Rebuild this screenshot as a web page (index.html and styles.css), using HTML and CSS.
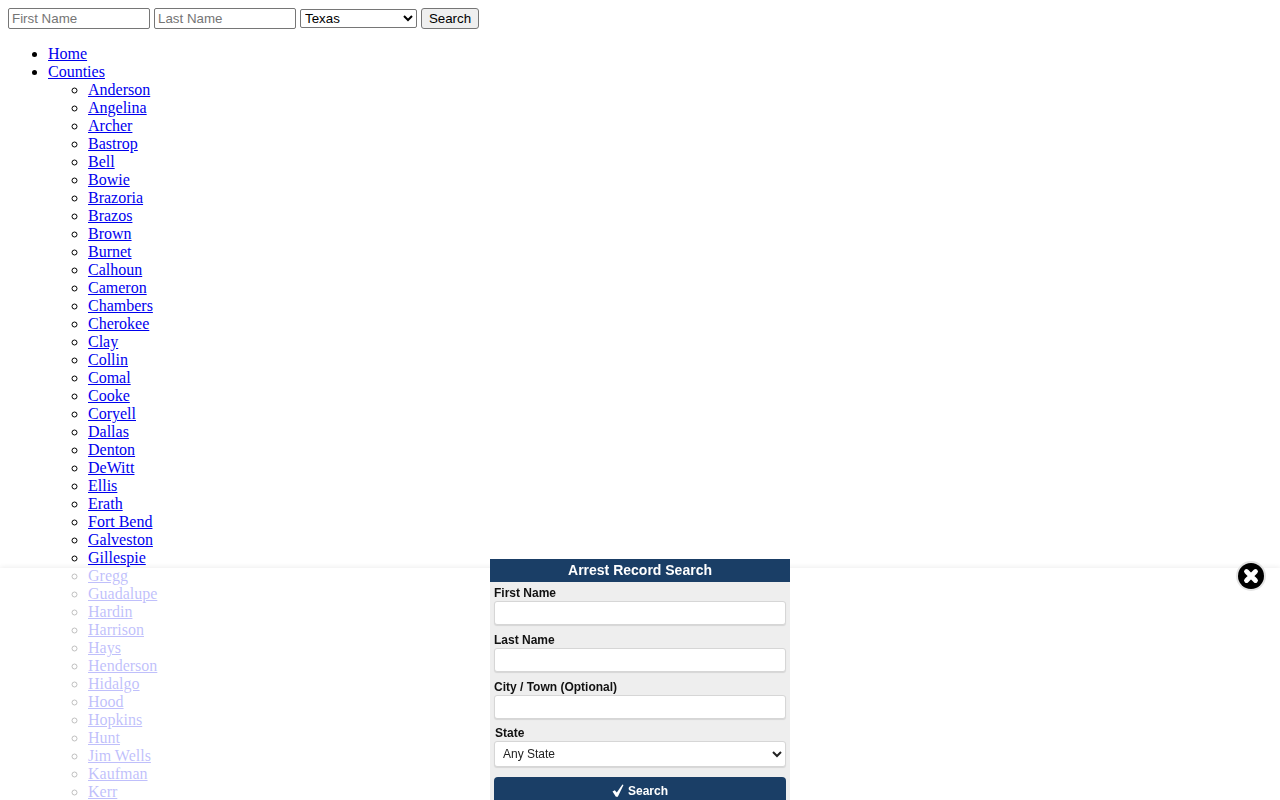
FILE: index.html
```html
<!DOCTYPE html>
<html lang="en">
<head>
<meta charset="utf-8">
<title>Arrest Records</title>
<link rel="stylesheet" href="styles.css">
</head>
<body>
<form class="top-search">
  <input class="top-input" type="text" placeholder="First Name">
  <input class="top-input" type="text" placeholder="Last Name">
  <select class="top-select"><option>Texas</option></select>
  <button class="top-button" type="button">Search</button>
</form>
<ul class="nav">
  <li><a href="#">Home</a></li>
  <li><a href="#">Counties</a>
    <ul>
      <li><a href="#">Anderson</a></li>
      <li><a href="#">Angelina</a></li>
      <li><a href="#">Archer</a></li>
      <li><a href="#">Bastrop</a></li>
      <li><a href="#">Bell</a></li>
      <li><a href="#">Bowie</a></li>
      <li><a href="#">Brazoria</a></li>
      <li><a href="#">Brazos</a></li>
      <li><a href="#">Brown</a></li>
      <li><a href="#">Burnet</a></li>
      <li><a href="#">Calhoun</a></li>
      <li><a href="#">Cameron</a></li>
      <li><a href="#">Chambers</a></li>
      <li><a href="#">Cherokee</a></li>
      <li><a href="#">Clay</a></li>
      <li><a href="#">Collin</a></li>
      <li><a href="#">Comal</a></li>
      <li><a href="#">Cooke</a></li>
      <li><a href="#">Coryell</a></li>
      <li><a href="#">Dallas</a></li>
      <li><a href="#">Denton</a></li>
      <li><a href="#">DeWitt</a></li>
      <li><a href="#">Ellis</a></li>
      <li><a href="#">Erath</a></li>
      <li><a href="#">Fort Bend</a></li>
      <li><a href="#">Galveston</a></li>
      <li><a href="#">Gillespie</a></li>
      <li><a href="#">Gregg</a></li>
      <li><a href="#">Guadalupe</a></li>
      <li><a href="#">Hardin</a></li>
      <li><a href="#">Harrison</a></li>
      <li><a href="#">Hays</a></li>
      <li><a href="#">Henderson</a></li>
      <li><a href="#">Hidalgo</a></li>
      <li><a href="#">Hood</a></li>
      <li><a href="#">Hopkins</a></li>
      <li><a href="#">Hunt</a></li>
      <li><a href="#">Jim Wells</a></li>
      <li><a href="#">Kaufman</a></li>
      <li><a href="#">Kerr</a></li>
    </ul>
  </li>
</ul>
<aside class="overlay">
  <form class="panel">
    <h2 class="panel-title">Arrest Record Search</h2>
    <div class="panel-body">
      <label class="field"><span class="field-label">First Name</span><input class="field-input" type="text"></label>
      <label class="field"><span class="field-label">Last Name</span><input class="field-input" type="text"></label>
      <label class="field"><span class="field-label">City / Town (Optional)</span><input class="field-input" type="text"></label>
      <label class="field field-state"><span class="field-label">State</span><select class="field-select"><option>Any State</option></select></label>
      <button class="panel-button" type="button">
        <svg class="check" viewBox="0 0 12 13" width="12" height="13" aria-hidden="true"><path d="M0.5 7.5 L2.8 6.3 L4.8 8.4 L10.4 0.5 L11.5 1.1 L5.8 12.8 L3.9 12.8 Z" fill="#fff"/></svg>
        Search
      </button>
    </div>
  </form>
  <button class="close" type="button" aria-label="Close">
    <svg viewBox="0 0 30 30" width="30" height="30" aria-hidden="true">
      <circle cx="15" cy="15" r="15" fill="#e4e4e4"/>
      <circle cx="15" cy="15" r="13" fill="#000"/>
      <path d="M10.5 10.5 L19.5 19.5 M19.5 10.5 L10.5 19.5" stroke="#fff" stroke-width="4.8" stroke-linecap="round"/>
    </svg>
  </button>
</aside>
</body>
</html>
```
FILE: styles.css
```css
html {
  overflow: hidden;
}
body {
  margin: 8px;
  font-family: "Liberation Serif", "Times New Roman", serif;
  font-size: 16px;
  color: #000;
  background: #fff;
}
.top-search {
  display: flex;
  align-items: center;
  gap: 4px;
  height: 21px;
}
.top-input,
.top-select,
.top-button {
  font-family: "Liberation Sans", Arial, sans-serif;
  font-size: 13.333px;
  box-sizing: border-box;
  margin: 0;
}
.top-input {
  width: 142px;
  height: 21px;
  padding: 1px 3px;
  border: 1px solid #767676;
  border-radius: 2px;
  background: #fff;
}
.top-select {
  width: 117px;
  height: 19px;
  border: 1px solid #767676;
  border-radius: 2px;
  background: #fff;
}
.top-button {
  width: 58px;
  height: 21px;
  padding: 1px 6px;
  border: 1px solid #767676;
  border-radius: 3px;
  background: #efefef;
  color: #000;
}
.nav {
  margin: 16px 0;
  padding-left: 40px;
  line-height: 18px;
}
.nav ul {
  margin: 0;
  padding-left: 40px;
}
.overlay {
  position: fixed;
  left: 0;
  right: 0;
  bottom: 0;
  height: 232px;
  display: flex;
  justify-content: center;
  background: rgba(255, 255, 255, 0.75);
  box-shadow: 0 -1px 5px rgba(0, 0, 0, 0.07);
}
.panel {
  width: 300px;
  margin-top: -9px;
  background: #eee;
  font-family: "Liberation Sans", Arial, sans-serif;
  filter: blur(0.3px);
}
.panel-title {
  margin: 0;
  height: 23px;
  line-height: 23px;
  font-size: 14px;
  font-weight: bold;
  text-align: center;
  color: #fff;
  background: #1a3e66;
}
.panel-body {
  display: flex;
  flex-direction: column;
  padding: 4px 4px 0;
}
.field {
  display: flex;
  flex-direction: column;
  gap: 1px;
  margin-bottom: 8px;
}
.field-label {
  height: 14px;
  line-height: 14px;
  font-size: 12px;
  font-weight: bold;
  color: #111;
}
.field-input {
  box-sizing: border-box;
  height: 24px;
  margin: 0;
  background: #fff;
  border: 1px solid #d6d6d6;
  border-radius: 3px;
  box-shadow: 0 1px 1px rgba(0, 0, 0, 0.1);
}
.field-state {
  gap: 1px;
  margin-top: -1px;
  margin-bottom: 10px;
}
.field-state .field-label {
  padding-left: 1px;
}
.field-select {
  box-sizing: border-box;
  height: 26px;
  padding-left: 4px;
  background: #fff;
  border: 1px solid #d6d6d6;
  border-radius: 3px;
  box-shadow: 0 1px 1px rgba(0, 0, 0, 0.1);
  font-family: "Liberation Sans", Arial, sans-serif;
  font-size: 12px;
  color: #222;
}
.panel-button {
  display: flex;
  align-items: center;
  justify-content: center;
  gap: 4px;
  height: 28px;
  padding: 0 0 1px;
  border: 0;
  border-radius: 4px;
  background: #1a3e66;
  color: #fff;
  font-family: "Liberation Sans", Arial, sans-serif;
  font-size: 12px;
  font-weight: bold;
}
.close {
  position: absolute;
  top: -7px;
  right: 14px;
  width: 30px;
  height: 30px;
  padding: 0;
  border: 0;
  background: none;
  line-height: 0;
}
```
